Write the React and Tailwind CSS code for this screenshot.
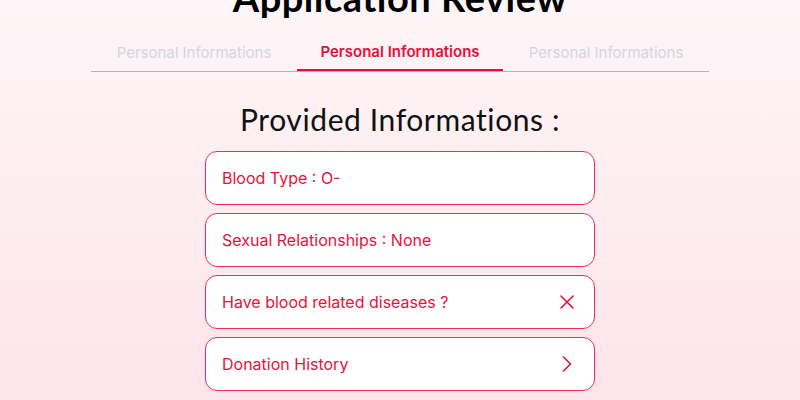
import { X, ChevronRight } from 'lucide-react';

const tabs = ['Personal Informations', 'Personal Informations', 'Personal Informations'];

const items = [
  { label: 'Blood Type : O-' },
  { label: 'Sexual Relationships : None' },
  { label: 'Have blood related diseases ?', icon: 'x' },
  { label: 'Donation History', icon: 'chevron' },
];

export default function App() {
  return (
    <div className="min-h-screen bg-gradient-to-b from-[#fdf5f7] to-[#fde5ea] font-['Inter','Liberation_Sans',sans-serif] overflow-hidden">
      <h1 className="-mt-[33px] h-[60px] text-center text-[38px] leading-[60px] font-bold text-black font-['Lato','Liberation_Sans',sans-serif] tracking-[0.5px]">
        Application Review
      </h1>

      <div className="mx-auto mt-[4px] w-[618px] grid grid-cols-3 border-b border-[#b4b4bc]">
        {tabs.map((t, i) => (
          <div
            key={i}
            className={
              i === 1
                ? 'h-[40px] pt-[5px] flex items-center justify-center text-[15px] font-semibold text-[#ee0d3a] border-b-2 border-[#ee0d3a] -mb-px'
                : 'h-[40px] pt-[5px] flex items-center justify-center text-[15px] text-[#d3d6de]'
            }
          >
            {t}
          </div>
        ))}
      </div>

      <h2 className="mt-[27px] text-center text-[30px] leading-[40px] text-[#111] font-['Lato','Liberation_Sans',sans-serif] tracking-[0.6px]">
        Provided Informations :
      </h2>

      <div className="mx-auto mt-[12px] w-[390px] flex flex-col gap-2">
        {items.map((it, i) => (
          <div
            key={i}
            className={
              'h-[54px] rounded-[12px] border border-[#ef2d55] bg-white flex items-center justify-between pl-4 text-[16px] text-[#e8123c] ' +
              (it.icon === 'chevron' ? 'pr-[13px]' : 'pr-[15px]')
            }
          >
            <span>{it.label}</span>
            {it.icon === 'x' && <X size={24} strokeWidth={1.6} />}
            {it.icon === 'chevron' && <ChevronRight size={28} strokeWidth={1.4} />}
          </div>
        ))}
      </div>
    </div>
  );
}
